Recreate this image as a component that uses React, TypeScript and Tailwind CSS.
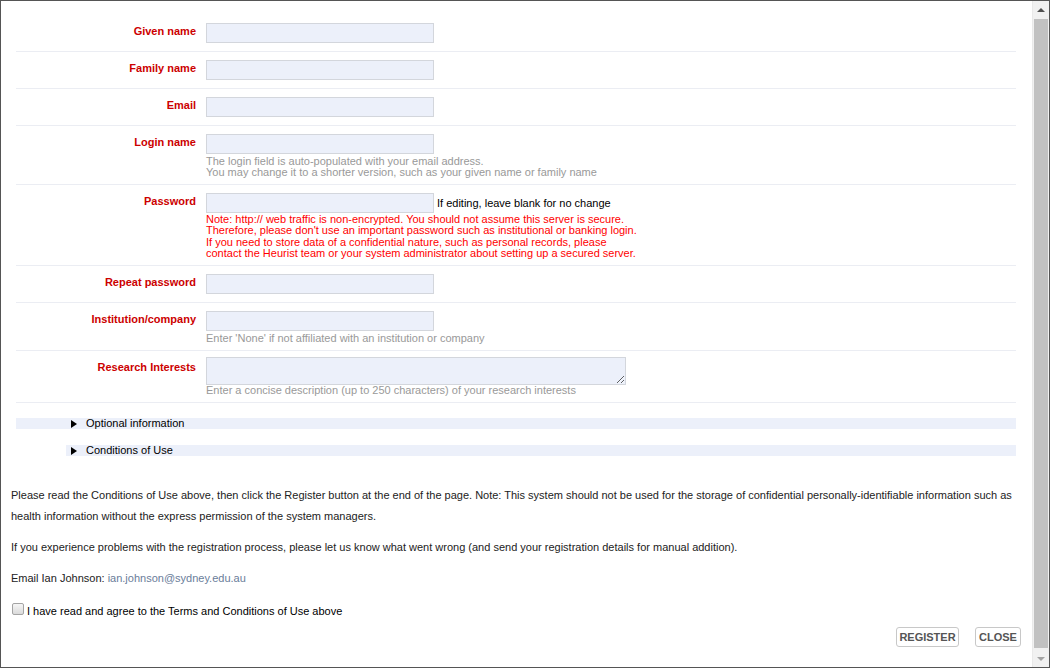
import cx from "clsx"
import React from "react"

const Row = ({
  label,
  className,
  labelClassName,
  children,
}: {
  label: string
  className?: string
  labelClassName?: string
  children: React.ReactNode
}) => {
  return (
    <div className={cx("flex border-b border-[#ebedf3]", className ?? "pt-[8px] pb-[8px]")}>
      <div
        className={cx(
          "w-[180px] shrink-0 text-right font-bold leading-[13px] text-[#cc0000]",
          labelClassName ?? "pt-[2px]",
        )}
      >
        {label}
      </div>
      <div className="ml-[10px]">{children}</div>
    </div>
  )
}

const Field = () => (
  <input
    type="text"
    className="block h-[20px] w-[228px] border border-[#d3d6dc] bg-[#ecf0fa] outline-none"
  />
)

const Help = ({ children }: { children: React.ReactNode }) => (
  <div className="mt-[2px] leading-[11px] text-[#999]">{children}</div>
)

const Toggle = ({ title, className }: { title: string; className: string }) => (
  <div className={cx("flex h-[11px] items-start bg-[#ecf0fa]", className)}>
    <span className="mt-[2px] h-0 w-0 border-y-[4.5px] border-l-[6px] border-y-transparent border-l-black" />
    <span className="ml-[9px] leading-[11px]">{title}</span>
  </div>
)

const Scrollbar = () => (
  <div className="flex w-[17px] shrink-0 flex-col border-l border-[#e9e9e9] bg-[#f1f1f1]">
    <div className="flex h-[17px] items-center justify-center">
      <span className="h-0 w-0 border-x-[4px] border-b-[4px] border-x-transparent border-b-[#505050]" />
    </div>
    <div className="mt-[1px] mb-[2px] ml-[1px] mr-[1px] flex-1 bg-[#c1c1c1]" />
    <div className="flex h-[17px] items-center justify-center">
      <span className="h-0 w-0 border-x-[4px] border-t-[4px] border-x-transparent border-t-[#a3a3a3]" />
    </div>
  </div>
)

export default function App() {
  return (
    <div className="flex h-[668px] w-[1050px] overflow-hidden border border-[#555] bg-white font-['Liberation_Sans',Arial,sans-serif] text-[11px] text-black">
      <div className="flex min-w-0 flex-1 flex-col overflow-hidden pt-[14px]">
        <div className="mx-[15px] w-[1000px]">
          <Row label="Given name">
            <Field />
          </Row>
          <Row label="Family name">
            <Field />
          </Row>
          <Row label="Email">
            <Field />
          </Row>
          <Row label="Login name" className="pt-[8px] pb-[6px]">
            <Field />
            <Help>
              The login field is auto-populated with your email address.
              <br />
              You may change it to a shorter version, such as your given name or family name
            </Help>
          </Row>
          <Row label="Password" className="pt-[8px] pb-[6px]">
            <div className="flex h-[20px] items-center">
              <Field />
              <span className="ml-[3px] leading-[13px]">If editing, leave blank for no change</span>
            </div>
            <div className="mt-[1px] leading-[11.3px] text-[#f00]">
              Note: http:// web traffic is non-encrypted. You should not assume this server is secure.
              <br />
              Therefore, please don't use an important password such as institutional or banking login.
              <br />
              If you need to store data of a confidential nature, such as personal records, please
              <br />
              contact the Heurist team or your system administrator about setting up a secured server.
            </div>
          </Row>
          <Row label="Repeat password">
            <Field />
          </Row>
          <Row label="Institution/company" className="pt-[8px] pb-[6px]">
            <Field />
            <Help>Enter 'None' if not affiliated with an institution or company</Help>
          </Row>
          <Row label="Research Interests" className="pt-[6px] pb-[6px]" labelClassName="pt-[4px]">
            <textarea className="block h-[28px] w-[420px] border border-[#d3d6dc] bg-[#ecf0fa] outline-none" />
            <div className="leading-[11px] text-[#999]">
              Enter a concise description (up to 250 characters) of your research interests
            </div>
          </Row>
        </div>

        <Toggle title="Optional information" className="mx-[15px] mt-[15px] w-[1000px] pl-[55px]" />
        <Toggle title="Conditions of Use" className="ml-[65px] mt-[16px] w-[950px] pl-[5px]" />

        <div className="px-[10px] text-[#222]">
          <p className="mt-[29px] leading-[21px]">
            Please read the Conditions of Use above, then click the Register button at the end of the page. Note:
            This system should not be used for the storage of confidential personally-identifiable information such
            as health information without the express permission of the system managers.
          </p>
          <p className="mt-[10px] leading-[21px]">
            If you experience problems with the registration process, please let us know what went wrong (and send
            your registration details for manual addition).
          </p>
          <p className="mt-[10px] leading-[21px]">
            Email Ian Johnson: <span className="text-[#6a7d9a]">ian.johnson@sydney.edu.au</span>
          </p>
          <label className="mt-[14px] flex items-start">
            <input
              type="checkbox"
              className="ml-[1px] h-[12px] w-[12px] appearance-none rounded-[2px] border border-[#a4a4a4] bg-gradient-to-b from-[#f6f6f6] to-[#dadada]"
            />
            <span className="ml-[3px] mt-[2px] leading-[13px] text-black">
              I have read and agree to the Terms and Conditions of Use above
            </span>
          </label>
        </div>

        <div className="mt-[9px] flex justify-end gap-[16px] pr-[11px]">
          <button className="h-[20px] w-[63px] rounded-[3px] border border-[#c8c8c8] bg-white text-center text-[11px] font-bold text-[#555]">
            REGISTER
          </button>
          <button className="h-[20px] w-[46px] rounded-[3px] border border-[#c8c8c8] bg-white text-center text-[11px] font-bold text-[#555]">
            CLOSE
          </button>
        </div>
      </div>
      <Scrollbar />
    </div>
  )
}
